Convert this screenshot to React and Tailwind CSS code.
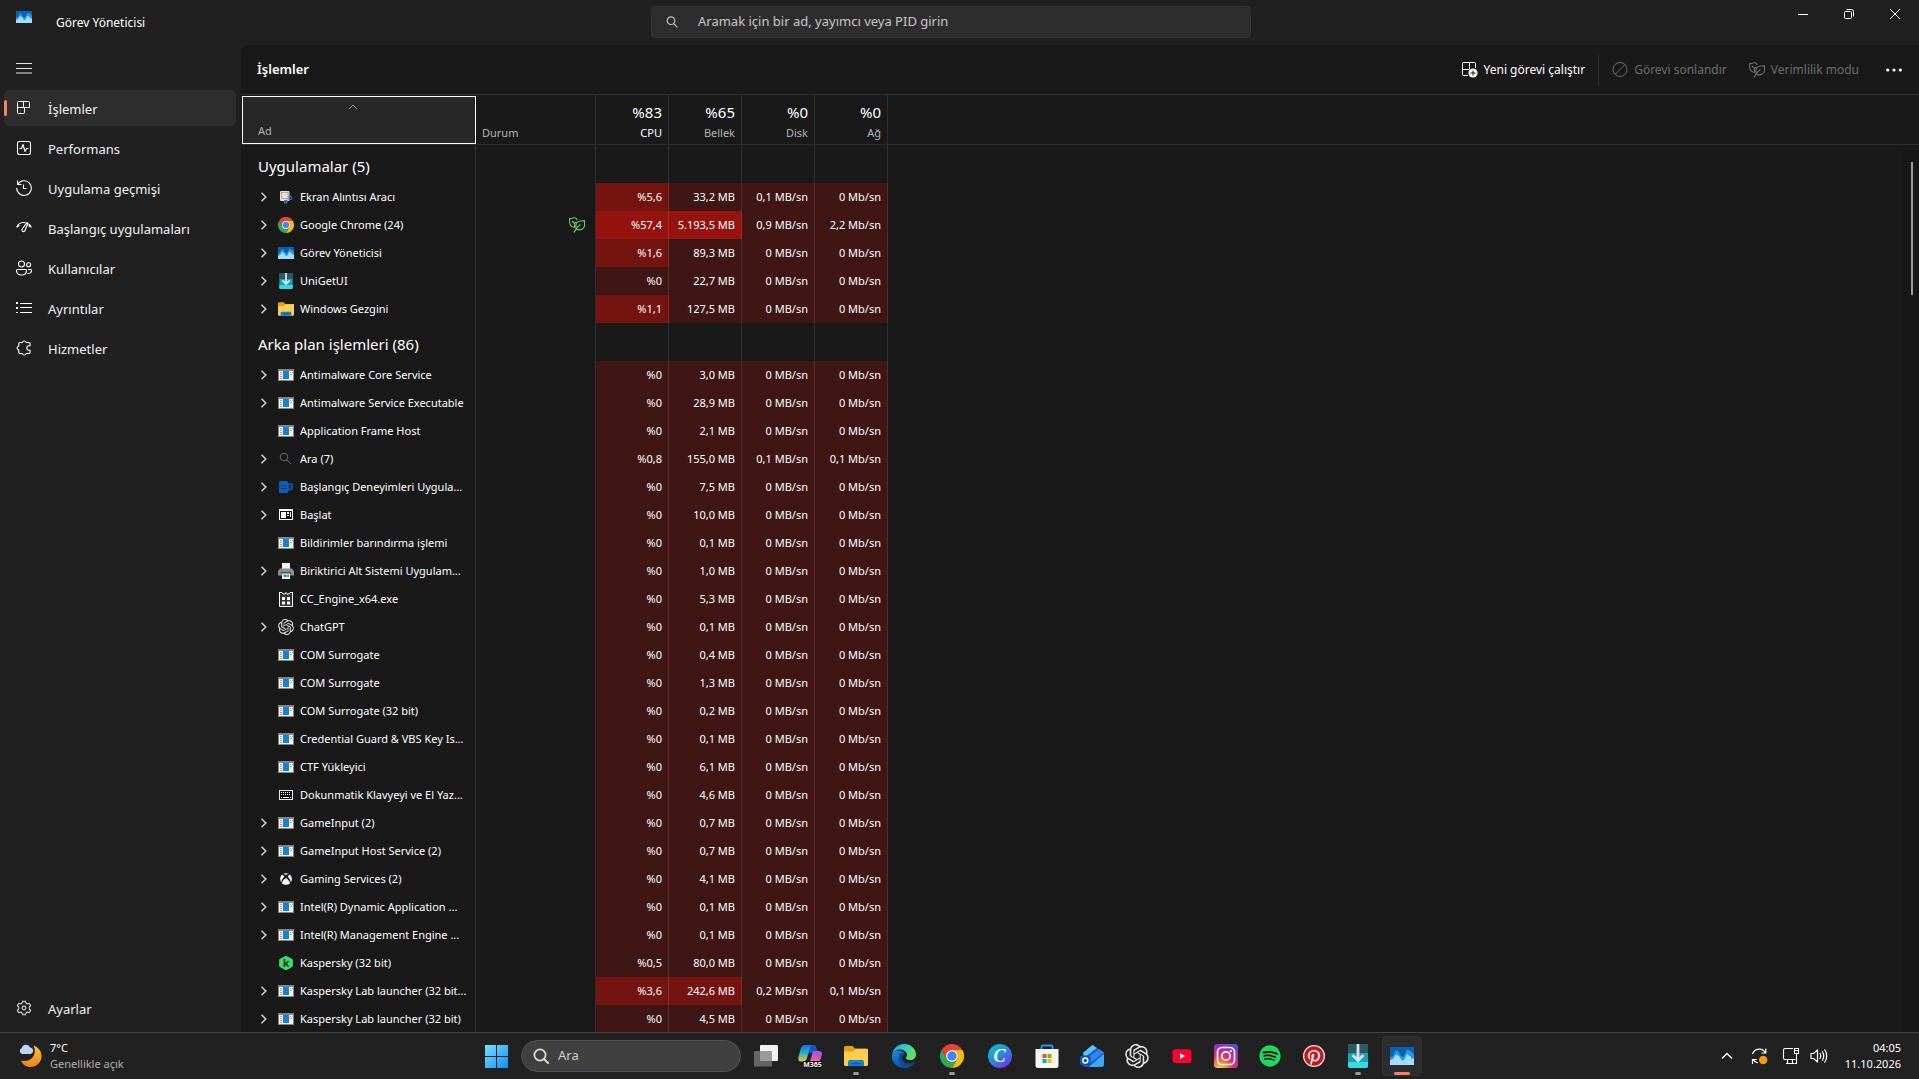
import clsx from "clsx";
import { FaPinterest, FaSpotify, FaXbox } from "react-icons/fa";
import { RiOpenaiFill } from "react-icons/ri";

const NAV = [
  { label: "İşlemler", icon: ProcessesIcon },
  { label: "Performans", icon: PerformanceIcon },
  { label: "Uygulama geçmişi", icon: HistoryIcon },
  { label: "Başlangıç uygulamaları", icon: StartupIcon },
  { label: "Kullanıcılar", icon: UsersIcon },
  { label: "Ayrıntılar", icon: DetailsIcon },
  { label: "Hizmetler", icon: ServicesIcon },
];

const USAGE = [
  { label: "CPU", total: "%83" },
  { label: "Bellek", total: "%65" },
  { label: "Disk", total: "%0" },
  { label: "Ağ", total: "%0" },
];

// heat: one digit for each usage column, 0 = low, 2 = high
const APPS = [
  { name: "Ekran Alıntısı Aracı", icon: SnippingIcon, open: true, usage: ["%5,6", "33,2 MB", "0,1 MB/sn", "0 Mb/sn"], heat: "1000" },
  { name: "Google Chrome (24)", icon: ChromeIcon, open: true, eco: true, usage: ["%57,4", "5.193,5 MB", "0,9 MB/sn", "2,2 Mb/sn"], heat: "2200" },
  { name: "Görev Yöneticisi", icon: TaskManagerIcon, open: true, usage: ["%1,6", "89,3 MB", "0 MB/sn", "0 Mb/sn"], heat: "1000" },
  { name: "UniGetUI", icon: UniGetIcon, open: true, usage: ["%0", "22,7 MB", "0 MB/sn", "0 Mb/sn"] },
  { name: "Windows Gezgini", icon: FolderIcon, open: true, usage: ["%1,1", "127,5 MB", "0 MB/sn", "0 Mb/sn"], heat: "1000" },
];

const idle = (memory) => ["%0", memory, "0 MB/sn", "0 Mb/sn"];

const BACKGROUND = [
  { name: "Antimalware Core Service", open: true, usage: idle("3,0 MB") },
  { name: "Antimalware Service Executable", open: true, usage: idle("28,9 MB") },
  { name: "Application Frame Host", usage: idle("2,1 MB") },
  { name: "Ara (7)", icon: DimSearchIcon, open: true, usage: ["%0,8", "155,0 MB", "0,1 MB/sn", "0,1 Mb/sn"] },
  { name: "Başlangıç Deneyimleri Uygula...", icon: StartExperienceIcon, open: true, usage: idle("7,5 MB") },
  { name: "Başlat", icon: StartPanelIcon, open: true, usage: idle("10,0 MB") },
  { name: "Bildirimler barındırma işlemi", usage: idle("0,1 MB") },
  { name: "Biriktirici Alt Sistemi Uygulam...", icon: PrinterIcon, open: true, usage: idle("1,0 MB") },
  { name: "CC_Engine_x64.exe", icon: EngineIcon, usage: idle("5,3 MB") },
  { name: "ChatGPT", icon: OpenAiIcon, open: true, usage: idle("0,1 MB") },
  { name: "COM Surrogate", usage: idle("0,4 MB") },
  { name: "COM Surrogate", usage: idle("1,3 MB") },
  { name: "COM Surrogate (32 bit)", usage: idle("0,2 MB") },
  { name: "Credential Guard & VBS Key Is...", usage: idle("0,1 MB") },
  { name: "CTF Yükleyici", usage: idle("6,1 MB") },
  { name: "Dokunmatik Klavyeyi ve El Yaz...", icon: KeyboardIcon, usage: idle("4,6 MB") },
  { name: "GameInput (2)", open: true, usage: idle("0,7 MB") },
  { name: "GameInput Host Service (2)", open: true, usage: idle("0,7 MB") },
  { name: "Gaming Services (2)", icon: XboxIcon, open: true, usage: idle("4,1 MB") },
  { name: "Intel(R) Dynamic Application ...", open: true, usage: idle("0,1 MB") },
  { name: "Intel(R) Management Engine ...", open: true, usage: idle("0,1 MB") },
  { name: "Kaspersky (32 bit)", icon: KasperskyIcon, usage: ["%0,5", "80,0 MB", "0 MB/sn", "0 Mb/sn"] },
  { name: "Kaspersky Lab launcher (32 bit...", open: true, usage: ["%3,6", "242,6 MB", "0,2 MB/sn", "0,1 Mb/sn"], heat: "1100" },
  { name: "Kaspersky Lab launcher (32 bit)", open: true, usage: idle("4,5 MB") },
];

const PINNED = [
  { label: "Görev görünümü", icon: TaskViewIcon, slot: "w-11" },
  { label: "Microsoft 365", icon: M365Icon, slot: "w-11" },
  { label: "Dosya Gezgini", icon: FolderIcon, slot: "w-12", running: true },
  { label: "Microsoft Edge", icon: EdgeIcon, slot: "w-12" },
  { label: "Google Chrome", icon: ChromeIcon, slot: "w-12", running: true },
  { label: "Canva", icon: CanvaIcon, slot: "w-12" },
  { label: "Microsoft Store", icon: StoreIcon, slot: "w-[45px]" },
  { label: "Outlook", icon: OutlookIcon, slot: "w-[45px]" },
  { label: "ChatGPT", icon: OpenAiIcon, slot: "w-[45px]" },
  { label: "YouTube", icon: YouTubeIcon, slot: "w-[45px]" },
  { label: "Instagram", icon: InstagramIcon, slot: "w-11" },
  { label: "Spotify", icon: SpotifyIcon, slot: "w-11" },
  { label: "Pinterest", icon: PinterestIcon, slot: "w-11" },
  { label: "UniGetUI", icon: UniGetIcon, slot: "w-11", running: true },
  { label: "Görev Yöneticisi", icon: TaskManagerIcon, slot: "w-11", active: true },
];

export default function App() {
  return (
    <div className="flex h-screen flex-col overflow-hidden bg-[#202020] font-['Segoe_UI','Noto_Sans',sans-serif] text-[11px] text-white">
      <TitleBar />
      <div className="flex min-h-0 flex-1">
        <Sidebar />
        <main className="flex min-w-0 flex-1 flex-col overflow-hidden rounded-tl-lg bg-[#191919]">
          <Toolbar />
          <ProcessTable />
        </main>
      </div>
      <Taskbar />
    </div>
  );
}

function TitleBar() {
  return (
    <header className="flex h-[45px] shrink-0 items-start">
      <div className="flex flex-1 pl-4">
        <TaskManagerIcon className="mt-[9px] size-4" />
        <h1 className="mt-[15px] ml-6 text-[12px] leading-4">Görev Yöneticisi</h1>
      </div>
      <label className="mt-[6px] mr-8 flex h-8 w-[600px] items-center rounded border border-[#323232] bg-[#2d2d2d] pl-[14px]">
        <svg viewBox="0 0 12 12" className="size-3" fill="none" stroke="#c5c5c5" strokeWidth="1.2">
          <circle cx="5" cy="4.7" r="3.8" />
          <path d="M7.7 7.6L11.4 11.3" />
        </svg>
        <input
          type="text"
          aria-label="Ara"
          placeholder="Aramak için bir ad, yayımcı veya PID girin"
          className="ml-5 flex-1 bg-transparent text-[13px] outline-none placeholder:text-[#c8c8c8]"
        />
      </label>
      <div className="flex flex-1 justify-end pr-px">
        <button aria-label="Simge durumuna küçült" className="flex h-7 w-[46px] items-center justify-center">
          <svg viewBox="0 0 10 10" className="size-[10px]">
            <path d="M0 5h10v1H0z" fill="#fff" />
          </svg>
        </button>
        <button aria-label="Önceki boyut" className="flex h-7 w-[46px] items-center justify-center">
          <svg viewBox="0 0 10 10" className="size-[10px]" fill="none" stroke="#fff">
            <rect x="0.5" y="2.5" width="7" height="7" rx="1" />
            <path d="M2.5 0.5h5a2 2 0 0 1 2 2v5" />
          </svg>
        </button>
        <button aria-label="Kapat" className="flex h-7 w-[46px] items-center justify-center">
          <svg viewBox="0 0 10 10" className="size-[10px]" stroke="#fff">
            <path d="M0 0L10 10M10 0L0 10" />
          </svg>
        </button>
      </div>
    </header>
  );
}

function Sidebar() {
  return (
    <nav className="flex w-[241px] shrink-0 flex-col pr-[5px] pl-1 text-[13px]">
      <button aria-label="Gezintiyi kapat" className="mb-1 flex h-[41px] items-center pt-1 pl-3">
        <svg viewBox="0 0 16 16" className="size-4" fill="#e4e4e4">
          <path d="M0 3h16v1H0zM0 8h16v1H0zM0 12.5h16v1H0z" />
        </svg>
      </button>
      <ul className="flex flex-col gap-1">
        {NAV.map((item, i) => (
          <li key={item.label}>
            <NavButton {...item} active={i === 0} />
          </li>
        ))}
      </ul>
      <div className="mt-auto mb-[6px]">
        <NavButton label="Ayarlar" icon={SettingsIcon} />
      </div>
    </nav>
  );
}

function NavButton({ label, icon: Icon, active = false }) {
  return (
    <button
      className={clsx(
        "flex h-9 w-full items-center rounded-md",
        active && "bg-[#2d2d2d]",
      )}
    >
      <span className={clsx("h-4 w-[3px] rounded-full", active && "bg-[#f97f62]")} />
      <Icon className="ml-[9px] size-4" />
      <span className="ml-4 pt-[3px] text-[#f2f2f2]">{label}</span>
    </button>
  );
}

function Toolbar() {
  return (
    <div className="flex h-[50px] shrink-0 items-center border-b border-[#2e2e2e] pr-[17px] pl-4 text-[12px]">
      <h2 className="mr-auto pt-px text-[13px] font-semibold">İşlemler</h2>
      <button className="flex items-center gap-[6px]">
        <NewTaskIcon className="size-4" />
        Yeni görevi çalıştır
      </button>
      <span className="mx-[13px] h-8 w-px bg-[#2e2e2e]" />
      <button disabled className="flex items-center gap-[6px] text-[#6c6c6c]">
        <svg viewBox="0 0 16 16" className="size-4" fill="none" stroke="currentColor">
          <circle cx="8" cy="7.5" r="7" />
          <path d="M3.2 12.3L12.8 2.7" />
        </svg>
        Görevi sonlandır
      </button>
      <button disabled className="ml-[22px] flex items-center gap-[6px] text-[#6c6c6c]">
        <LeafIcon className="size-4" />
        Verimlilik modu
      </button>
      <button aria-label="Diğer" className="ml-[27px]">
        <svg viewBox="0 0 16 4" className="h-1 w-4" fill="#fff">
          <circle cx="1.7" cy="2" r="1.6" />
          <circle cx="8" cy="2" r="1.6" />
          <circle cx="14.3" cy="2" r="1.6" />
        </svg>
      </button>
    </div>
  );
}

function ProcessTable() {
  return (
    <div className="relative min-h-0 flex-1 overflow-hidden pl-px">
      <table className="w-full table-fixed border-separate border-spacing-0">
        <colgroup>
          <col className="w-[234px]" />
          <col className="w-[120px]" />
          <col className="w-[73px]" />
          <col className="w-[73px]" />
          <col className="w-[73px]" />
          <col className="w-[73px]" />
          <col />
        </colgroup>
        <thead>
          <tr>
            <th className="h-[50px] border-b border-[#2e2e2e] p-0 pt-px text-left font-normal">
              <button className="flex h-12 w-full flex-col items-start justify-between border border-white bg-[#272727] pt-[7px] pb-1 pl-[15px] text-[#b4b4b4]">
                <svg viewBox="0 0 10 6" className="mr-[27px] h-[6px] w-[10px] self-center" fill="none" stroke="#9c9c9c">
                  <path d="M1 5L5 1L9 5" />
                </svg>
                <span className="leading-4">Ad</span>
              </button>
            </th>
            <th className="border-r border-b border-[#2e2e2e] p-0 pb-[3px] pl-[6px] text-left align-bottom leading-4 font-normal text-[#b4b4b4]">
              Durum
            </th>
            {USAGE.map(({ label, total }, i) => (
              <th key={label} className="border-r border-b border-[#2e2e2e] p-0 pr-[6px] pb-[3px] text-right align-bottom font-normal">
                <div className="text-[15px] leading-[25px]">{total}</div>
                <div className={clsx("leading-4", i > 0 && "text-[#b4b4b4]")}>{label}</div>
              </th>
            ))}
            <th className="border-b border-[#2e2e2e] p-0" />
          </tr>
        </thead>
        <ProcessGroup title="Uygulamalar (5)" items={APPS} />
        <ProcessGroup title="Arka plan işlemleri (86)" items={BACKGROUND} />
      </table>
      <div className="absolute top-[50px] right-0 bottom-0 w-4 bg-[#171717]">
        <div className="mt-[17px] ml-2 h-[133px] w-[2px] bg-[#9a9a9a]" />
      </div>
    </div>
  );
}

function ProcessGroup({ title, items }) {
  return (
    <tbody>
      <tr>
        <th className="h-[38px] border-r border-[#2e2e2e] p-0 pt-1 pl-4 text-left text-[15px] font-normal">{title}</th>
        {[0, 1, 2, 3, 4].map((n) => (
          <td key={n} className="border-r border-[#2e2e2e]" />
        ))}
        <td />
      </tr>
      {items.map((item, i) => (
        <ProcessRow key={i} {...item} />
      ))}
    </tbody>
  );
}

function ProcessRow({ name, icon: Icon = WindowIcon, open = false, eco = false, usage, heat = "0000" }) {
  return (
    <tr>
      <td className="h-7 border-r border-[#2e2e2e] p-0">
        <div className="flex items-center pl-4 whitespace-nowrap">
          {open ? (
            <button aria-label="Genişlet" className="flex w-5 pl-[2px]">
              <svg viewBox="0 0 8 10" className="h-[10px] w-2" fill="none" stroke="#d0d0d0" strokeWidth="1.5">
                <path d="M1.5 0.8L5.8 5L1.5 9.2" />
              </svg>
            </button>
          ) : (
            <span className="w-5" />
          )}
          <Icon className="size-4 shrink-0" />
          <span className="ml-[6px]">{name}</span>
        </div>
      </td>
      <td className="border-r border-[#2e2e2e] p-0 pr-[10px]">
        {eco && <LeafIcon className="ml-auto size-4 text-[#6ccb5f]" />}
      </td>
      {usage.map((value, i) => (
        <td
          key={i}
          className={clsx(
            "border-r border-white/10 p-0 pr-[6px] text-right whitespace-nowrap",
            heat[i] === "0" && "bg-[#401614]",
            heat[i] === "1" && "bg-[#741410]",
            heat[i] === "2" && "bg-[#94130e]",
          )}
        >
          {value}
        </td>
      ))}
      <td />
    </tr>
  );
}

function Taskbar() {
  return (
    <footer className="flex h-[47px] shrink-0 items-center border-t border-[#454545] bg-[#212121]">
      <div className="flex flex-1 items-center pl-[18px]">
        <button className="flex items-center gap-2 text-left leading-4">
          <WeatherIcon className="size-6" />
          <span className="flex flex-col">
            <span>7°C</span>
            <span className="text-[#b0b0b0]">Genellikle açık</span>
          </span>
        </button>
      </div>
      <div className="flex items-center pr-[21px]">
        <button aria-label="Başlat" className="flex w-11 justify-center">
          <WindowsIcon className="size-[23px]" />
        </button>
        <label className="mx-[3px] flex h-8 w-[220px] items-center rounded-full border border-[#505050] bg-[#404040] pl-[11px]">
          <svg viewBox="0 0 16 16" className="size-4" fill="none" stroke="#dcdcdc" strokeWidth="1.8">
            <circle cx="7" cy="7" r="5.6" />
            <path d="M11 11L15 15" strokeLinecap="round" />
          </svg>
          <input
            type="text"
            aria-label="Ara"
            placeholder="Ara"
            className="ml-[9px] w-32 bg-transparent text-[13px] outline-none placeholder:text-[#cfcfcf]"
          />
        </label>
        {PINNED.map(({ label, icon: Icon, slot, running, active }) => (
          <div key={label} className={clsx("flex justify-center", slot)}>
            <button
              aria-label={label}
              className={clsx(
                "relative flex size-10 items-center justify-center rounded",
                active && "border border-[#333] bg-[#2d2d2d]",
              )}
            >
              <Icon className="size-6" />
              {running && <span className="absolute bottom-[1px] h-[3px] w-[6px] rounded-full bg-[#9a9a9a]" />}
              {active && <span className="absolute bottom-0 h-[3px] w-4 rounded-full bg-[#f97f62]" />}
            </button>
          </div>
        ))}
      </div>
      <div className="flex flex-1 items-center justify-end pr-[18px]">
        <button aria-label="Gizli simgeler" className="mr-[17px]">
          <svg viewBox="0 0 12 8" className="h-2 w-3" fill="none" stroke="#fff" strokeWidth="1.4">
            <path d="M1 6.5L6 1.5L11 6.5" />
          </svg>
        </button>
        <button aria-label="Windows Update" className="mr-[14px]">
          <UpdateIcon className="size-[18px]" />
        </button>
        <button aria-label="Ağ ve ses" className="mr-[17px] flex gap-[10px]">
          <NetworkIcon className="size-[18px]" />
          <VolumeIcon className="size-[18px]" />
        </button>
        <button className="flex flex-col items-end leading-4">
          <span>04:05</span>
          <span>11.10.2026</span>
        </button>
      </div>
    </footer>
  );
}

/* Line icons */

function ProcessesIcon({ className }) {
  return (
    <svg viewBox="0 0 16 16" className={className} fill="none" stroke="#fff">
      <path d="M2.5 1.5H12.500A1 1 0 0 1 13.500 2.500V7.500H8.500V12.500A1 1 0 0 1 7.500 13.500H2.500A1 1 0 0 1 1.500 12.500V2.500A1 1 0 0 1 2.500 1.500ZM7.500 1.500V7.500M1.500 7.500H8.500" />
    </svg>
  );
}

function PerformanceIcon({ className }) {
  return (
    <svg viewBox="0 0 16 16" className={className} fill="none" stroke="#fff" strokeWidth="1.1">
      <rect x="1.5" y="1.5" width="13" height="13" rx="2" />
      <path d="M3.5 8.5H5.5L7 4.5L9 11.5L10.5 8.5H12.5" strokeLinejoin="round" />
    </svg>
  );
}

function HistoryIcon({ className }) {
  return (
    <svg viewBox="0 0 16 16" className={className} fill="none" stroke="#fff" strokeWidth="1.1">
      <path d="M1.5 0.5V4.5H5.5" />
      <path d="M1.7 4.4A7.3 7.3 0 1 1 0.7 8" />
      <path d="M7.5 4.5V8.5H10.5" />
    </svg>
  );
}

function StartupIcon({ className }) {
  return (
    <svg viewBox="0 0 16 16" className={className} fill="none" stroke="#fff" strokeWidth="1.1">
      <path d="M0.6 7.2A8 8 0 0 1 9.5 2.6M12.5 4A8 8 0 0 1 15.4 7.2M0.8 7.2L3.4 5.4M15.2 7.2L12.6 5.8" />
      <path d="M11 2.6L6.3 8.9A1.6 1.6 0 1 0 9 10.5L12 3.2Z" strokeLinejoin="round" />
    </svg>
  );
}

function UsersIcon({ className }) {
  return (
    <svg viewBox="0 0 16 16" className={className} fill="none" stroke="#fff" strokeWidth="1.1">
      <circle cx="5.5" cy="4" r="3" />
      <circle cx="12.6" cy="4.8" r="2" />
      <path d="M1.5 9.5H9.5A1 1 0 0 1 10.5 10.5C10.5 13.5 8.5 15 5.5 15S0.5 13.5 0.5 10.5A1 1 0 0 1 1.5 9.5Z" />
      <path d="M12 9.5H14.5A1 1 0 0 1 15.5 10.5C15.5 12.5 14 13.7 11.3 13.5" />
    </svg>
  );
}

function DetailsIcon({ className }) {
  return (
    <svg viewBox="0 0 16 16" className={className} fill="#fff">
      <path d="M0 2h2v2H0zM0 7h2v2H0zM0 12h2v1H0zM4 3h12v1H4zM4 7h12v1H4zM4 12h12v1H4z" />
    </svg>
  );
}

function ServicesIcon({ className }) {
  return (
    <svg viewBox="0 0 16 16" className={className} fill="none" stroke="#fff" strokeWidth="1.1">
      <path
        d="M4 2.5H6.3A2 2 0 0 1 10.2 2.5H12.9A1.2 1.2 0 0 1 14.1 3.700V5.800H13A2 2 0 0 0 13 10.200H14.100V12.300A1.200 1.200 0 0 1 12.900 13.500H10.200A2 2 0 0 1 6.300 13.500H4A1.200 1.200 0 0 1 2.800 12.300V10.100A2.100 2.100 0 0 1 2.800 6V3.700A1.200 1.200 0 0 1 4 2.500Z"
        strokeLinejoin="round"
      />
    </svg>
  );
}

function SettingsIcon({ className }) {
  return (
    <svg viewBox="0 0 16 16" className={className} fill="none" stroke="#e0e0e0" strokeWidth="1.1" strokeLinejoin="round">
      <circle cx="8" cy="8" r="1.9" />
      <path d="M6.6 1.2H9.4L9.9 3.1L11.3 3.9L13.2 3.3L14.7 5.7L13.3 7.1V8.9L14.7 10.3L13.2 12.7L11.3 12.1L9.9 12.9L9.4 14.8H6.6L6.1 12.9L4.7 12.1L2.8 12.7L1.3 10.3L2.7 8.9V7.1L1.3 5.7L2.8 3.3L4.7 3.9L6.1 3.1Z" />
    </svg>
  );
}

function NewTaskIcon({ className }) {
  return (
    <svg viewBox="0 0 16 16" className={className} fill="none" stroke="#fff">
      <path d="M6 13.5H1.5A1 1 0 0 1 0.5 12.5V1.5A1 1 0 0 1 1.5 0.5H12.5A1 1 0 0 1 13.5 1.5V6M7.5 0.5V7.5M0.5 7.5H7" />
      <circle cx="11" cy="11" r="4.6" fill="#fff" stroke="none" />
      <path d="M11 8.5V13.5M8.5 11H13.5" stroke="#191919" />
    </svg>
  );
}

function LeafIcon({ className }) {
  return (
    <svg viewBox="0 0 16 16" className={className} fill="none" stroke="currentColor" strokeWidth="1.1" strokeLinejoin="round">
      <path d="M5.5 10.5C2.5 10 0.6 8 0.6 5V1.500C2.500 2 3.500 0.600 5.500 0.800C7.300 1 8 2.200 8 3.200M3 4L5.600 6.500V10.500M5.600 6.500L7.400 4.800" />
      <path d="M7.500 12C6 9.500 7 5 10 4.200C12 3.600 14 4.500 15.500 3.500V8.500C15.500 12 11 14 7.500 12ZM5 15.500C6 13 8.500 9.500 11.500 7.500" />
    </svg>
  );
}

function UpdateIcon({ className }) {
  return (
    <svg viewBox="0 0 18 18" className={className} fill="none" stroke="#fff" strokeWidth="1.2">
      <path d="M2.5 7A7 7 0 0 1 15.5 6M15.8 1.5V6H11.5M8 16A7 7 0 0 1 3.2 12.6M2.5 17V12.5H6.8" />
      <circle cx="13.2" cy="13" r="4.2" fill="#f99a0b" stroke="none" />
    </svg>
  );
}

function NetworkIcon({ className }) {
  return (
    <svg viewBox="0 0 18 18" className={className} fill="none" stroke="#fff" strokeWidth="1.1">
      <path d="M11 1.5H3A1.5 1.5 0 0 0 1.5 3V11A1.5 1.5 0 0 0 3 12.5H13.5M5.5 12.5V16M10.5 12.5V16M4 16.5H12.5" />
      <path d="M12.5 1.5H16.5V6.5H12.5ZM14.5 6.5V16.5H12.5M12.5 3.5H16.5" />
    </svg>
  );
}

function VolumeIcon({ className }) {
  return (
    <svg viewBox="0 0 18 18" className={className} fill="none" stroke="#fff" strokeWidth="1.2" strokeLinejoin="round">
      <path d="M1 6.5H3.5L7.5 3V15L3.5 11.5H1Z" />
      <path d="M10 6.5Q11.5 9 10 11.5M12.5 4.7Q15 9 12.5 13.3M14.8 2.8Q18.6 9 14.8 15.2" strokeLinecap="round" />
    </svg>
  );
}

/* Process icons */

function WindowIcon({ className }) {
  return (
    <svg viewBox="0 0 16 16" className={className} shapeRendering="crispEdges">
      <path fill="#86837f" d="M0 2h16v12H0z" />
      <path fill="#f6f6f6" d="M1 4h14v9H1z" />
      <path fill="#1180d6" d="M5 4h6v8H5z" />
      <path fill="#a4a8ac" d="M2 5h2v1H2zM2 7h2v1H2zM2 9h2v1H2zM2 11h2v1H2zM12 5h1v1h-1zM14 5h1v1h-1zM12 7h2v1h-2z" />
    </svg>
  );
}

function SnippingIcon({ className }) {
  return (
    <svg viewBox="0 0 16 16" className={className}>
      <rect x="2" y="2" width="9.5" height="10" rx="1" fill="#e6e2e0" />
      <rect x="3.5" y="3.5" width="6.5" height="6" fill="none" stroke="#d8503c" strokeDasharray="1 1" />
      <path d="M10.5 4V10L8 13" stroke="#9db4c2" strokeWidth="1.2" fill="none" />
      <circle cx="12.4" cy="9" r="1.5" fill="none" stroke="#2187c9" strokeWidth="1.1" />
      <circle cx="7.6" cy="12.8" r="1.4" fill="none" stroke="#2187c9" strokeWidth="1.1" />
    </svg>
  );
}

function DimSearchIcon({ className }) {
  return (
    <svg viewBox="0 0 16 16" className={className} fill="none" stroke="#6b6b6b">
      <circle cx="6" cy="6" r="3.8" />
      <path d="M8.8 8.8L13 13" />
    </svg>
  );
}

function StartExperienceIcon({ className }) {
  return (
    <svg viewBox="0 0 16 16" className={className}>
      <path fill="#0f5cb4" d="M1 3.5Q1 2 2.5 2H8.5Q10 2 10 3.5V12.500Q10 14 8.500 14H2.500Q1 14 1 12.500Z" />
      <path fill="#0d4f9e" d="M10 4H13.500Q15 4 15 5.500V9.500Q15 11 13.500 11L10 12.500Z" />
      <path stroke="#0a3064" d="M3 6.500H8M3 9.500H8" />
      <path fill="#191919" d="M11.500 6h1.500v3.500h-1.500z" />
    </svg>
  );
}

function StartPanelIcon({ className }) {
  return (
    <svg viewBox="0 0 16 16" className={className} shapeRendering="crispEdges">
      <path fill="#fff" d="M1 2h14v11H1z" />
      <path fill="#111" d="M2 4h12v8H2z" />
      <path fill="#fff" d="M3 5h5v6H3zM9 5h2v2H9zM9 8h2v1H9zM12 5h1v5h-1z" />
    </svg>
  );
}

function PrinterIcon({ className }) {
  return (
    <svg viewBox="0 0 16 16" className={className}>
      <path fill="#f3f3f3" d="M4 0h8v6H4z" />
      <path fill="#8b8f93" d="M2 5.5h12l2 2.5v4.5H0V8z" />
      <path fill="#4a4d50" d="M3 9h10v2H3z" />
      <path fill="#fff" d="M4 10.5h8V16H4z" />
      <path fill="#2e86c8" d="M5.5 11.5h3V14h-3z" />
      <path fill="#49a256" d="M9 11.5h2V14H9z" />
    </svg>
  );
}

function EngineIcon({ className }) {
  return (
    <svg viewBox="0 0 16 16" className={className}>
      <path fill="#333" stroke="#fff" d="M1.5 3V15.5H14.5V3" />
      <path stroke="#fff" fill="none" d="M1 1.5H4L5 3H7L8 1.5L9 3H11L12 1.5H15M1.5 4V1M14.5 4V1" />
      <path fill="#fff" d="M4 6h3v3H4zM9 6h3v3H9zM4 10.5h3v3H4zM9 10.5h3v3H9z" />
    </svg>
  );
}

function KeyboardIcon({ className }) {
  return (
    <svg viewBox="0 0 16 16" className={className} shapeRendering="crispEdges">
      <path fill="#e8e8e8" d="M1 3h14v10H1z" />
      <path fill="#101010" d="M2 4h12v8H2z" />
      <path stroke="#fff" strokeDasharray="1 1" d="M3 5.5H13M3 7.5H13" />
      <path stroke="#fff" d="M3 10.5H4M5 10.5H11M12 10.5H13" />
    </svg>
  );
}

function XboxIcon({ className }) {
  return <FaXbox className={clsx(className, "p-[2px]")} />;
}

function KasperskyIcon({ className }) {
  return (
    <svg viewBox="0 0 16 16" className={className}>
      <path fill="#3fdb6d" stroke="#3fdb6d" strokeLinejoin="round" d="M8 1.2L14.3 4.6V11.4L8 14.8L1.7 11.4V4.6Z" />
      <text x="8.2" y="12" textAnchor="middle" fontSize="11" fontWeight="700" fill="#0d3d2b">
        k
      </text>
    </svg>
  );
}

/* App logos, used in the list and on the taskbar */

function TaskManagerIcon({ className }) {
  return (
    <svg viewBox="0 0 24 24" className={className}>
      <path fill="#0c5fae" d="M0 3h24v18H0z" />
      <path fill="#1f9be6" d="M0 13L3 12L5.5 6L8 7L11 12L13.5 13L17 5.5L20 6.5L24 10V21H0z" />
      <path fill="#a6dcfa" d="M0 16L3 15L6 10.5L9 12L12 16.5L14 16L17 10L20 12L22 15L24 14V21H0z" />
    </svg>
  );
}

function ChromeIcon({ className }) {
  return (
    <svg viewBox="0 0 48 48" className={className}>
      <path fill="#ea4335" d="M3.2 12A24 24 0 0 1 44.8 12H24A12 12 0 0 0 13.6 30Z" />
      <path fill="#fbbc04" d="M44.8 12A24 24 0 0 1 24 48L34.4 30A12 12 0 0 0 24 12Z" />
      <path fill="#34a853" d="M3.2 12A24 24 0 0 0 24 48L34.4 30A12 12 0 0 1 13.6 30Z" />
      <circle cx="24" cy="24" r="12" fill="#fff" />
      <circle cx="24" cy="24" r="9.5" fill="#4285f4" />
    </svg>
  );
}

function UniGetIcon({ className }) {
  return (
    <svg viewBox="0 0 24 24" className={className}>
      <rect x="2" width="20" height="24" rx="2" fill="#17a3b4" />
      <path fill="#2c5763" d="M4 0H20A2 2 0 0 1 22 2V9H2V2A2 2 0 0 1 4 0Z" />
      <path fill="#35dbe4" d="M2 18H22V22A2 2 0 0 1 20 24H4A2 2 0 0 1 2 22Z" />
      <path stroke="#d8e4e6" strokeWidth="2.8" fill="none" d="M12 0V16M6.5 11L12 16.5L17.5 11" />
    </svg>
  );
}

function FolderIcon({ className }) {
  return (
    <svg viewBox="0 0 24 24" className={className}>
      <path fill="#e2a012" d="M0 3.5Q0 2 1.5 2H8.5L11 4.5H22.5Q24 4.5 24 6V12H0z" />
      <path fill="#fdce4b" d="M0 7.5H9L11.5 5H24V20.5Q24 22 22.5 22H1.5Q0 22 0 20.5z" />
      <path fill="#1480d4" d="M4 22V18Q4 16 6 16H18Q20 16 20 18V22z" />
      <path stroke="#0b579a" strokeWidth="1.5" d="M7.5 19.5H16.5" />
    </svg>
  );
}

function WindowsIcon({ className }) {
  return (
    <svg viewBox="0 0 23 23" className={className}>
      <defs>
        <linearGradient id="win" x1="0" y1="0" x2="23" y2="23" gradientUnits="userSpaceOnUse">
          <stop stopColor="#7fdcff" />
          <stop offset="1" stopColor="#0a93f5" />
        </linearGradient>
      </defs>
      <path fill="url(#win)" d="M0 0h11v11H0zM12 0h11v11H12zM0 12h11v11H0zM12 12h11v11H12z" />
    </svg>
  );
}

function TaskViewIcon({ className }) {
  return (
    <svg viewBox="0 0 24 24" className={className}>
      <rect x="6" y="1" width="18" height="16" rx="1" fill="#f2f2f2" />
      <rect x="0" y="7" width="18" height="15.5" rx="1" fill="#7c7c7c" fillOpacity="0.75" />
    </svg>
  );
}

function M365Icon({ className }) {
  return (
    <svg viewBox="0 0 24 24" className={className}>
      <defs>
        <linearGradient id="m365a" x1="0" y1="0" x2="0" y2="1">
          <stop stopColor="#1b6fe0" />
          <stop offset="0.5" stopColor="#22b8c8" />
          <stop offset="1" stopColor="#f2c522" />
        </linearGradient>
        <linearGradient id="m365b" x1="0" y1="0" x2="0" y2="1">
          <stop stopColor="#8f5bf0" />
          <stop offset="0.6" stopColor="#e352b8" />
          <stop offset="1" stopColor="#f7805a" />
        </linearGradient>
      </defs>
      <path fill="#1559c4" d="M7 1H15Q17.5 1 18.5 4L20 9H12L9 3z" />
      <path fill="url(#m365a)" d="M7 1H13L9 14Q8 17.5 5 17.5H2.5Q-0.5 17.5 0.5 13L3 4Q4 1 7 1z" />
      <path fill="url(#m365b)" d="M15 7H21Q25 7 23.8 11L22 16.5Q21 19 18 19H9.5Q12 18 12.8 15z" />
      <path fill="#000" d="M5 17h19v7H5z" />
      <text x="14.5" y="23" textAnchor="middle" fontSize="7" fontWeight="700" fill="#fff">
        M365
      </text>
    </svg>
  );
}

function EdgeIcon({ className }) {
  return (
    <svg viewBox="0 0 24 24" className={className}>
      <defs>
        <linearGradient id="edgeTop" x1="0" y1="0" x2="1" y2="0.4">
          <stop stopColor="#22a7e8" />
          <stop offset="0.5" stopColor="#2fc7d0" />
          <stop offset="1" stopColor="#62e05a" />
        </linearGradient>
        <linearGradient id="edgeBottom" x1="0" y1="0" x2="0.3" y2="1">
          <stop stopColor="#1a8be0" />
          <stop offset="1" stopColor="#0f4fa5" />
        </linearGradient>
      </defs>
      <path fill="url(#edgeBottom)" d="M0 12C0.5 7.5 5 6 8.5 7C11.5 8 12.5 9.5 12.5 10.5C10.5 11 9.5 13 10 15C10.8 18.5 15 20.5 19 19.5C20.5 19 21.8 18.3 22.3 18.5C20 22 16.5 24 12 24C5 24 -0.5 18.5 0 12Z" />
      <path fill="#0c4a97" d="M8 9.5C5.5 13 7 20.5 13 23.9C17 23.7 20.5 21.8 22.3 18.5C21 18.4 19 20 16 19.5C12 19 9.5 16.5 9.8 13.5C10 12 11 11 12.5 10.5C11.5 8.8 9.5 8.5 8 9.5Z" />
      <path fill="url(#edgeTop)" d="M0 11.5C0.6 5 5.5 0 12 0C19 0 24 5 24 10.5C24 14 21.5 16 18.5 16C15.5 16 13.8 15 13.8 14.2C13.8 13.5 15 13 15 11C15 8 12 5.5 8 5.5C4 5.5 1 8 0 11.5Z" />
    </svg>
  );
}

function CanvaIcon({ className }) {
  return (
    <svg viewBox="0 0 24 24" className={className}>
      <defs>
        <linearGradient id="canva" x1="0.1" y1="0.1" x2="0.8" y2="1">
          <stop stopColor="#00c4cc" />
          <stop offset="0.5" stopColor="#2a86e0" />
          <stop offset="1" stopColor="#7d2ae8" />
        </linearGradient>
      </defs>
      <circle cx="12" cy="12" r="12" fill="url(#canva)" />
      <text x="11.5" y="18" textAnchor="middle" fontSize="18" fontWeight="700" fontStyle="italic" fontFamily="Liberation Serif, serif" fill="#fff">
        C
      </text>
    </svg>
  );
}

function StoreIcon({ className }) {
  return (
    <svg viewBox="0 0 24 24" className={className}>
      <path fill="none" stroke="#1ea0ee" strokeWidth="1.8" d="M6.5 6V3Q6.5 1.5 8 1.5H16Q17.5 1.5 17.5 3V6" />
      <path fill="#f4f4f4" d="M0.5 5H23.5V21.5Q23.5 24 21 24H3Q0.5 24 0.5 21.5z" />
      <path fill="#f25022" d="M7.5 10h4v4h-4z" />
      <path fill="#7fba00" d="M12.5 10h4v4h-4z" />
      <path fill="#00a4ef" d="M7.5 15h4v4h-4z" />
      <path fill="#ffb900" d="M12.5 15h4v4h-4z" />
    </svg>
  );
}

function OutlookIcon({ className }) {
  return (
    <svg viewBox="0 0 24 24" className={className}>
      <path fill="#1a5fc8" d="M3 8.5L12.5 1L24 8.5V20Q24 23 21 23H6Q3 23 3 20z" />
      <path fill="#5cc3f8" d="M3 9L12.5 1L17 4L5 13z" />
      <path fill="#2f86ea" d="M6 15L19 5L24 8.5L10 19z" />
      <path fill="#3fa9f5" d="M24 10V20Q24 23 21 23H9z" />
      <rect x="0" y="11.5" width="10.5" height="10" rx="2" fill="#0f56b8" />
      <circle cx="5.3" cy="16.5" r="2.5" fill="none" stroke="#fff" strokeWidth="1.4" />
    </svg>
  );
}

function OpenAiIcon({ className }) {
  return <RiOpenaiFill viewBox="2 2 20 20" className={clsx(className, "text-[#e4e4e4]")} />;
}

function YouTubeIcon({ className }) {
  return (
    <svg viewBox="0 0 24 24" className={className}>
      <rect x="2.5" y="5.2" width="19" height="13.8" rx="3" fill="#ff0033" />
      <path fill="#fff" d="M10 9.2V15L15 12.1z" />
    </svg>
  );
}

function InstagramIcon({ className }) {
  return (
    <svg viewBox="0 0 24 24" className={className}>
      <defs>
        <radialGradient id="insta" cx="0.25" cy="1.05" r="1.15">
          <stop stopColor="#fedb74" />
          <stop offset="0.25" stopColor="#fa8a34" />
          <stop offset="0.5" stopColor="#e1306c" />
          <stop offset="0.8" stopColor="#a030b8" />
          <stop offset="1" stopColor="#5151d8" />
        </radialGradient>
      </defs>
      <rect width="24" height="24" rx="3" fill="url(#insta)" />
      <g fill="none" stroke="#fff" strokeWidth="1.7">
        <rect x="3.5" y="3.5" width="17" height="17" rx="4.5" />
        <circle cx="12" cy="12" r="4.2" />
      </g>
      <circle cx="16.8" cy="7.2" r="1.1" fill="#fff" />
    </svg>
  );
}

function SpotifyIcon() {
  return (
    <span className="flex size-[22px] items-center justify-center rounded-full bg-[#111]">
      <FaSpotify className="size-[22px] text-[#1ed760]" />
    </span>
  );
}

function PinterestIcon() {
  return (
    <span className="flex size-[22px] items-center justify-center rounded-full bg-[#e6e6e6]">
      <FaPinterest className="size-5 text-[#c8171f]" />
    </span>
  );
}

function WeatherIcon({ className }) {
  return (
    <svg viewBox="0 0 24 24" className={className}>
      <defs>
        <linearGradient id="moon" x1="0" y1="0" x2="0" y2="1">
          <stop stopColor="#fbc53c" />
          <stop offset="1" stopColor="#ef7f1c" />
        </linearGradient>
      </defs>
      <path fill="url(#moon)" d="M15.5 1.5C21 3.5 24 8 23.5 13C23 19 18 23 12.5 23C8 23 4.5 20.5 3 16.5C8 18 13 16.5 15.5 12C17.5 8.5 17.2 4.5 15.5 1.5Z" />
      <path fill="#bcd2f7" d="M4.2 10A3.2 3.2 0 0 1 3.8 3.9A4.3 4.3 0 0 1 12 3.5A3.3 3.3 0 0 1 12.5 10Z" />
    </svg>
  );
}
